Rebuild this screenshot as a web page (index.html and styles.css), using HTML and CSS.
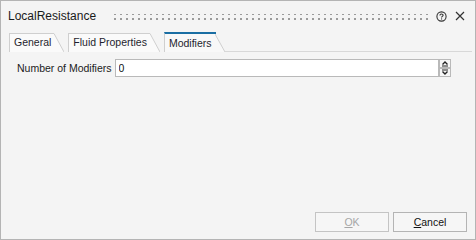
FILE: index.html
```html
<!DOCTYPE html>
<html lang="en">
<head>
  <meta charset="UTF-8" />
  <title>LocalResistance</title>
  <link rel="stylesheet" href="styles.css">
</head>
<body>
  <div class="window">
    <div class="titlebar">
      <span class="title">LocalResistance</span>
      <svg class="grip" height="8">
        <defs>
          <pattern id="dots" width="6" height="5" patternUnits="userSpaceOnUse">
            <rect x="0" y="0" width="2" height="2" fill="#9b9b9b"/>
          </pattern>
        </defs>
        <rect x="0" y="1" width="100%" height="7" fill="url(#dots)"/>
      </svg>
      <svg class="help" width="11" height="11" viewBox="0 0 11 11">
        <circle cx="5.5" cy="5.5" r="4.6" fill="none" stroke="#333" stroke-width="1.1"/>
        <path d="M3.9 4.4 C3.9 2.6 7.1 2.6 7.1 4.3 C7.1 5.4 5.5 5.4 5.5 6.6" fill="none" stroke="#333" stroke-width="1.1"/>
        <rect x="5" y="7.4" width="1.1" height="1.1" fill="#333"/>
      </svg>
      <svg class="close" width="10" height="10" viewBox="0 0 10 10">
        <path d="M1 1 L9 9 M9 1 L1 9" stroke="#333" stroke-width="1.2"/>
      </svg>
    </div>

    <div class="tabs">
      <div class="tab">
        <span class="tab-label">General</span>
        <svg class="tab-edge" width="10" height="19" viewBox="0 0 10 19">
          <polygon points="0,0 0,19 10,19" fill="#fafafa"/>
          <line x1="0" y1="0.5" x2="10" y2="19" stroke="#cfcfcf"/>
        </svg>
      </div>
      <div class="tab">
        <span class="tab-label">Fluid Properties</span>
        <svg class="tab-edge" width="10" height="19" viewBox="0 0 10 19">
          <polygon points="0,0 0,19 10,19" fill="#fafafa"/>
          <line x1="0" y1="0.5" x2="10" y2="19" stroke="#cfcfcf"/>
        </svg>
      </div>
      <div class="tab active">
        <span class="tab-label">Modifiers</span>
        <svg class="tab-edge" width="10" height="20" viewBox="0 0 10 20">
          <polygon points="0,2 0,20 10,20" fill="#f8f8f8"/>
          <line x1="0" y1="2" x2="10" y2="20" stroke="#cfcfcf"/>
          <rect x="0" y="0" width="1" height="2" fill="#1a6ea3"/>
        </svg>
      </div>
      <div class="tab-line"></div>
    </div>

    <div class="content">
      <div class="field">
        <label for="count">Number of Modifiers</label>
        <input id="count" type="text" value="0">
        <svg class="spin" width="12" height="18" viewBox="0 0 12 18">
          <rect x="0.5" y="0.5" width="11" height="8" fill="#f6f6f6" stroke="#b9b9b9"/>
          <rect x="0.5" y="9.5" width="11" height="8" fill="#f6f6f6" stroke="#b9b9b9"/>
          <path d="M3.5 5.5 L6 3 L8.5 5.5" fill="none" stroke="#222" stroke-width="1.4"/>
          <path d="M3.5 12.5 L6 15 L8.5 12.5" fill="none" stroke="#222" stroke-width="1.4"/>
          <rect x="3" y="6.5" width="6" height="1" fill="#222"/>
          <rect x="3" y="10.5" width="6" height="1" fill="#222"/>
        </svg>
      </div>
    </div>

    <div class="buttons">
      <button class="btn" disabled><u>O</u>K</button>
      <button class="btn"><u>C</u>ancel</button>
    </div>
  </div>
</body>
</html>
```

FILE: styles.css
```css
* {
  box-sizing: border-box;
  margin: 0;
  padding: 0;
}
body {
  font-family: 'Liberation Sans', Arial, sans-serif;
  font-size: 10.5px;
  color: #1b1b1b;
  background: #f4f4f4;
}
.window {
  width: 476px;
  height: 240px;
  border: 1px solid #b4b4b4;
  background: #f4f4f4;
  display: flex;
  flex-direction: column;
}
.titlebar {
  height: 30px;
  display: flex;
  align-items: center;
  padding: 0 10px 0 7px;
}
.title {
  font-size: 12px;
  color: #1a1a1a;
}
.grip {
  flex: 1;
  margin: 1px 5px 0 18px;
}
.help {
  margin-right: 8px;
}
.tabs {
  display: flex;
  align-items: flex-end;
  height: 21px;
  padding-left: 8px;
}
.tab {
  display: flex;
  align-items: flex-end;
  margin-right: 4px;
}
.tab-label {
  height: 19px;
  line-height: 17px;
  padding: 0 3px 0 4px;
  border-top: 1px solid #cfcfcf;
  border-left: 1px solid #cfcfcf;
  background: #fafafa;
  color: #1e1e2e;
}
.tab-edge {
  display: block;
}
.tab.active .tab-label {
  height: 20px;
  line-height: 18px;
  border-top: 2px solid #1a6ea3;
  background: #f8f8f8;
}
.tab.active {
  margin-right: 0;
}
.tab-line {
  flex: 1;
  border-bottom: 1px solid #d8d8d8;
  margin-right: 3px;
}
.content {
  padding: 7px 0 0 16px;
}
.field {
  display: flex;
  align-items: center;
}
.field label {
  margin-right: 3px;
  color: #1b1b1b;
}
.field input {
  width: 324px;
  height: 18px;
  border: 1px solid #b9b9b9;
  background: #fff;
  font-family: inherit;
  font-size: 10.5px;
  padding: 0 3px;
  color: #111;
  outline: none;
}
.buttons {
  margin-top: auto;
  display: flex;
  justify-content: flex-end;
  gap: 4px;
  padding: 0 8px 7px 0;
}
.btn {
  width: 74px;
  height: 20px;
  border: 1px solid #b4b4b4;
  background: #f6f6f6;
  font-family: inherit;
  font-size: 10.5px;
  color: #111;
}
.btn:disabled {
  color: #a6a6a6;
  border-color: #c4c4c4;
}
```
